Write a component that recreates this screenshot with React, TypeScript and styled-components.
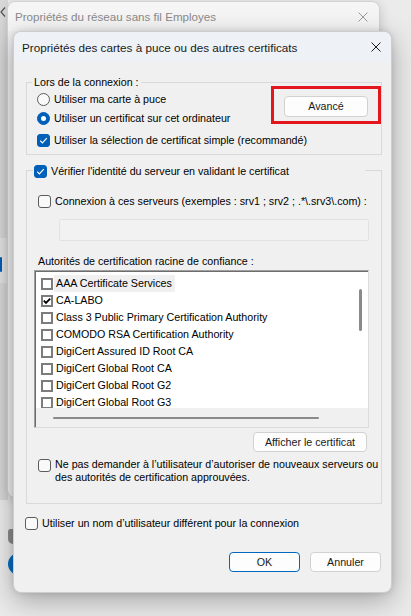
import React from 'react';
import styled, { createGlobalStyle } from 'styled-components';

const GlobalStyle = createGlobalStyle`
    html, body {
        margin: 0;
        padding: 0;
    }
    body {
        background: #ebebeb;
        font-family: "Liberation Sans", Arial, sans-serif;
    }
`;

const authorities = [
    { name: 'AAA Certificate Services', checked: false, focused: true },
    { name: 'CA-LABO', checked: true },
    { name: 'Class 3 Public Primary Certification Authority', checked: false },
    { name: 'COMODO RSA Certification Authority', checked: false },
    { name: 'DigiCert Assured ID Root CA', checked: false },
    { name: 'DigiCert Global Root CA', checked: false },
    { name: 'DigiCert Global Root G2', checked: false },
    { name: 'DigiCert Global Root G3', checked: false },
];

const CloseIcon = ({ color }: { color: string }) => (
    <svg width="10" height="10" viewBox="0 0 10 10">
        <path d="M0.5 0.5 L9.5 9.5 M9.5 0.5 L0.5 9.5" stroke={color} strokeWidth="1" fill="none" />
    </svg>
);

const CheckBox = ({ checked }: { checked?: boolean }) => (
    <Box $checked={checked}>
        {checked && (
            <svg width="9" height="9" viewBox="0 0 9 9">
                <path d="M1.2 4.6 L3.4 6.8 L7.8 2.2" stroke="#fff" strokeWidth="1.2" fill="none" />
            </svg>
        )}
    </Box>
);

const ListCheck = ({ checked }: { checked?: boolean }) => (
    <ClassicBox>
        {checked && (
            <svg width="8" height="8" viewBox="0 0 8 8">
                <path d="M0.8 3.6 L3 5.9 L7.2 1.6" stroke="#000" strokeWidth="1.8" fill="none" />
            </svg>
        )}
    </ClassicBox>
);

const App = () => {
    return (
        <Desktop>
            <GlobalStyle />
            <LeftPane />
            <BackChevron>
                <svg width="6" height="10" viewBox="0 0 6 10">
                    <path d="M5 0.5 L1 5 L5 9.5" stroke="#555" strokeWidth="1.2" fill="none" />
                </svg>
            </BackChevron>
            <NavHighlight />
            <NavIndicator />
            <UnderShield />
            <UnderCircle />

            <BackWindow>
                <BackTitleBar>
                    <span>Propriétés du réseau sans fil Employes</span>
                    <CloseIcon color="#9a9a9a" />
                </BackTitleBar>
            </BackWindow>

            <Dialog>
                <TitleBar>
                    <span>Propriétés des cartes à puce ou des autres certificats</span>
                    <CloseIcon color="#1a1a1a" />
                </TitleBar>
                <Body>
                    <Group $pad="0 0 4px 10px">
                        <Legend $offset={-5}>Lors de la connexion :</Legend>
                        <TopRow>
                            <OptionColumn>
                                <Option>
                                    <Radio />
                                    <span>Utiliser ma carte à puce</span>
                                </Option>
                                <Option>
                                    <Radio $checked />
                                    <span>Utiliser un certificat sur cet ordinateur</span>
                                </Option>
                            </OptionColumn>
                            <Highlight>
                                <Button $width={84} $height={21}>Avancé</Button>
                            </Highlight>
                        </TopRow>
                        <Option $top={3}>
                            <CheckBox checked />
                            <span>Utiliser la sélection de certificat simple (recommandé)</span>
                        </Option>
                    </Group>

                    <Group $pad="0 12px 19px 11px" $top={15}>
                        <CheckLegend>
                            <CheckBox checked />
                            <span>Vérifier l'identité du serveur en validant le certificat</span>
                        </CheckLegend>
                        <Option $top={21}>
                            <CheckBox />
                            <span>Connexion à ces serveurs (exemples : srv1 ; srv2 ; .*\.srv3\.com) :</span>
                        </Option>
                        <ServerInput />
                        <ListLabel>Autorités de certification racine de confiance :</ListLabel>
                        <ListBox>
                            <ListItems>
                                {authorities.map((a) => (
                                    <ListRow key={a.name}>
                                        <ListCheck checked={a.checked} />
                                        <ItemText $focused={a.focused}>{a.name}</ItemText>
                                    </ListRow>
                                ))}
                            </ListItems>
                            <VScroll>
                                <VThumb />
                            </VScroll>
                            <HScroll>
                                <HThumb />
                            </HScroll>
                            <Corner />
                        </ListBox>
                        <Button $width={114} $height={20} $align="flex-end" $top={4} $right={2}>
                            Afficher le certificat
                        </Button>
                        <MultiOption>
                            <CheckBox />
                            <span>
                                Ne pas demander à l’utilisateur d’autoriser de nouveaux serveurs ou
                                <br />
                                des autorités de certification approuvées.
                            </span>
                        </MultiOption>
                    </Group>

                    <Option $top={10} $left={-1}>
                        <CheckBox />
                        <span>Utiliser un nom d’utilisateur différent pour la connexion</span>
                    </Option>

                    <ButtonRow>
                        <Button $width={71} $height={20} $primary>OK</Button>
                        <Button $width={71} $height={20}>Annuler</Button>
                    </ButtonRow>
                </Body>
            </Dialog>
        </Desktop>
    );
};

const Desktop = styled.div`
    position: relative;
    width: 411px;
    height: 616px;
    overflow: hidden;
    background: #ebebeb;
`;

const LeftPane = styled.div`
    position: absolute;
    left: 0;
    top: 0;
    width: 8px;
    height: 500px;
    background: #dadada;
`;

const BackChevron = styled.div`
    position: absolute;
    left: 0;
    top: 3px;
`;

const NavHighlight = styled.div`
    position: absolute;
    left: 0;
    top: 238px;
    width: 10px;
    height: 45px;
    background: #e6e6e6;
`;

const NavIndicator = styled.div`
    position: absolute;
    left: 0;
    top: 257px;
    width: 2px;
    height: 15px;
    border-radius: 1px;
    background: #005fb8;
`;

const UnderShield = styled.div`
    position: absolute;
    left: 8px;
    top: 529px;
    width: 10px;
    height: 15px;
    border-radius: 3px 3px 6px 6px;
    background: #8c8c8c;
`;

const UnderCircle = styled.div`
    position: absolute;
    left: 8px;
    top: 553px;
    width: 22px;
    height: 22px;
    border-radius: 50%;
    background: #0a6cc4;
`;

const BackWindow = styled.div`
    position: absolute;
    left: 7px;
    top: 1px;
    width: 373px;
    height: 497px;
    box-sizing: border-box;
    border: 1px solid #d2d2d2;
    border-radius: 8px;
    background: #f1f1f1;
    box-shadow: 0 2px 12px rgba(0, 0, 0, 0.16);
`;

const BackTitleBar = styled.div`
    display: flex;
    align-items: center;
    justify-content: space-between;
    height: 29px;
    padding: 0 11px 0 7px;
    font-size: 11.6px;
    color: #8b8b8b;
    background: #f5f5f5;
    border-radius: 8px 8px 0 0;
`;

const Dialog = styled.div`
    position: absolute;
    left: 13px;
    top: 31px;
    width: 379px;
    box-sizing: border-box;
    border: 1px solid #cdcdcd;
    border-radius: 8px;
    overflow: hidden;
    background: #f0f0f0;
    box-shadow: 0 8px 28px rgba(0, 0, 0, 0.3), 0 0 6px rgba(0, 0, 0, 0.12);
    color: #000;
`;

const TitleBar = styled.div`
    display: flex;
    align-items: center;
    justify-content: space-between;
    height: 30px;
    padding: 0 10px 0 8px;
    font-size: 11.7px;
    color: #1a1a1a;
    background: #eef2f6;
`;

const Body = styled.div`
    display: flex;
    flex-direction: column;
    padding: 20px 9px 20px 12px;
    font-size: 10.7px;
    line-height: 13px;
`;

const Group = styled.div<{ $pad: string; $top?: number }>`
    display: flex;
    flex-direction: column;
    border: 1px solid #d9d9d9;
    padding: ${(p) => p.$pad};
    margin-top: ${(p) => p.$top || 0}px;
`;

const Legend = styled.div<{ $offset: number }>`
    align-self: flex-start;
    margin: -7px 0 -6px ${(p) => p.$offset}px;
    padding: 0 2px;
    height: 13px;
    background: #f0f0f0;
    white-space: nowrap;
`;

const CheckLegend = styled.div`
    display: flex;
    align-items: center;
    gap: 4px;
    width: 331px;
    height: 13px;
    margin: -6px 0 -7px -5px;
    padding-left: 1px;
    background: #f0f0f0;
    white-space: nowrap;
`;

const TopRow = styled.div`
    display: flex;
    justify-content: space-between;
    align-items: flex-start;
    margin-top: 3px;
`;

const OptionColumn = styled.div`
    display: flex;
    flex-direction: column;
    padding-top: 4px;
`;

const Option = styled.div<{ $top?: number; $left?: number }>`
    display: flex;
    align-items: center;
    gap: 4px;
    height: 19px;
    margin-top: ${(p) => p.$top || 0}px;
    margin-left: ${(p) => p.$left || 0}px;
    white-space: nowrap;
`;

const MultiOption = styled.div`
    display: flex;
    align-items: flex-start;
    gap: 4px;
    margin-top: 6px;
    white-space: nowrap;

    & > span:first-child {
        margin-top: 1px;
    }
`;

const Box = styled.span<{ $checked?: boolean }>`
    flex: none;
    display: inline-flex;
    align-items: center;
    justify-content: center;
    width: 13px;
    height: 13px;
    box-sizing: border-box;
    border-radius: 3px;
    border: 1px solid ${(p) => (p.$checked ? '#005fb8' : '#5c5c5c')};
    background: ${(p) => (p.$checked ? '#005fb8' : '#f9f9f9')};
`;

const Radio = styled.span<{ $checked?: boolean }>`
    flex: none;
    display: inline-flex;
    align-items: center;
    justify-content: center;
    width: 13px;
    height: 13px;
    box-sizing: border-box;
    border-radius: 50%;
    border: 1px solid ${(p) => (p.$checked ? '#005fb8' : '#5c5c5c')};
    background: ${(p) => (p.$checked ? '#005fb8' : '#f9f9f9')};

    &::after {
        content: '';
        display: ${(p) => (p.$checked ? 'block' : 'none')};
        width: 5px;
        height: 5px;
        border-radius: 50%;
        background: #fff;
    }
`;

const Highlight = styled.div`
    padding: 7px 10px 4px 10px;
    border: 3px solid #e3161e;
`;

const Button = styled.div<{
    $width: number;
    $height: number;
    $primary?: boolean;
    $align?: string;
    $top?: number;
    $right?: number;
}>`
    display: flex;
    align-items: center;
    justify-content: center;
    box-sizing: border-box;
    width: ${(p) => p.$width}px;
    height: ${(p) => p.$height}px;
    align-self: ${(p) => p.$align || 'auto'};
    margin-top: ${(p) => p.$top || 0}px;
    margin-right: ${(p) => p.$right || 0}px;
    border: 1px solid ${(p) => (p.$primary ? '#0067c0' : '#d1d1d1')};
    border-radius: 4px;
    background: #fdfdfd;
    color: #1a1a1a;
    white-space: nowrap;
`;

const ServerInput = styled.div`
    height: 22px;
    box-sizing: border-box;
    margin: 8px 0 0 21px;
    border: 1px solid #e2e2e2;
    border-radius: 2px;
    background: #f2f2f2;
`;

const ListLabel = styled.div`
    margin-top: 14px;
    height: 13px;
    white-space: nowrap;
`;

const ListBox = styled.div`
    display: grid;
    grid-template-columns: 1fr 16px;
    grid-template-rows: 137px 19px;
    margin: 2px 0 0 -4px;
    border-style: solid;
    border-width: 1px;
    border-color: #a0a0a0 #dcdcdc #dcdcdc #a0a0a0;
    box-shadow: inset 1px 1px 0 #6d6d6d;
`;

const ListItems = styled.div`
    overflow: hidden;
    padding-top: 4px;
    background: #fff;
    box-shadow: inset 1px 1px 0 #6d6d6d;
`;

const ListRow = styled.div`
    display: flex;
    align-items: center;
    gap: 1px;
    height: 17px;
    padding-left: 6px;
    white-space: nowrap;
`;

const ClassicBox = styled.span`
    flex: none;
    display: inline-flex;
    align-items: center;
    justify-content: center;
    width: 12px;
    height: 12px;
    box-sizing: border-box;
    border: 2px solid #7c7c7c;
    background: #fff;
`;

const ItemText = styled.span<{ $focused?: boolean }>`
    display: flex;
    align-items: center;
    height: 17px;
    padding: 0 3px 0 2px;
    background: ${(p) => (p.$focused ? '#f0f0f0' : 'transparent')};
`;

const VScroll = styled.div`
    background: #fff;
    padding-top: 18px;
    box-shadow: inset 0 1px 0 #6d6d6d;
`;

const VThumb = styled.div`
    width: 3px;
    height: 42px;
    margin-left: 7px;
    border-radius: 2px;
    background: #8a8a8a;
`;

const HScroll = styled.div`
    background: #f0f0f0;
    padding-top: 9px;
    box-shadow: inset 1px 0 0 #6d6d6d;
`;

const HThumb = styled.div`
    width: 266px;
    height: 2px;
    margin-left: 18px;
    border-radius: 1px;
    background: #8a8a8a;
`;

const Corner = styled.div`
    background: #f0f0f0;
`;

const ButtonRow = styled.div`
    display: flex;
    justify-content: flex-end;
    gap: 10px;
    margin: 19px 1px 0 0;
`;

export default App;
